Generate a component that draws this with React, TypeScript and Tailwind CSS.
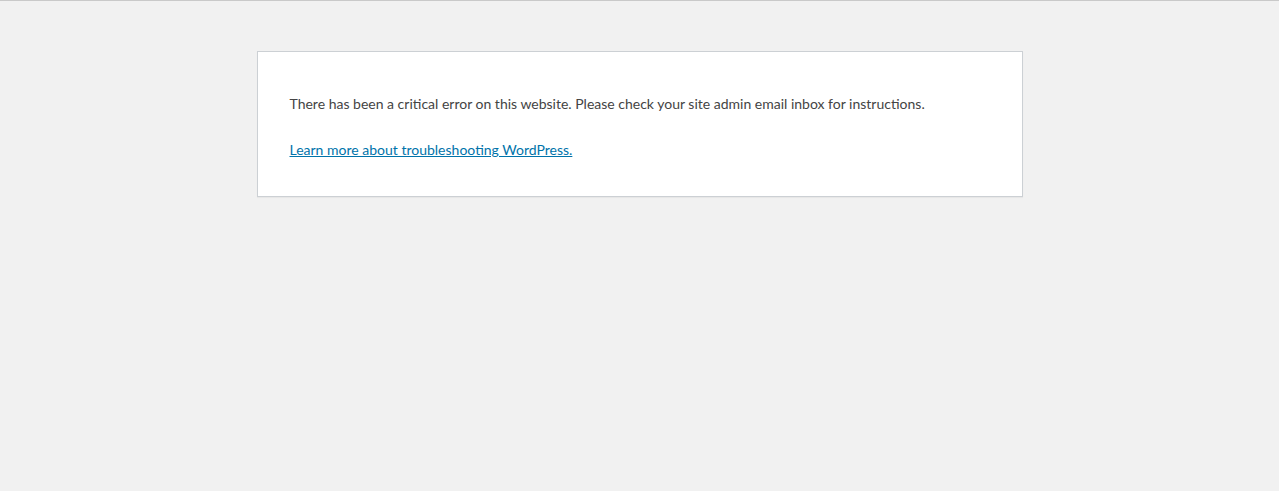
export default function App() {
  return (
    <div className="min-h-[491px] bg-[#f1f1f1] border-t border-[#c9c9c9] pt-[50px]" style={{ fontFamily: 'Lato, "Noto Sans", sans-serif' }}>
      <div className="mx-auto w-[766px] bg-white border border-[#ccd0d4] px-8 py-4 shadow-[0_1px_1px_rgba(0,0,0,0.04)] text-[#444]">
        <p className="text-[14px] leading-[21px] mt-[25px] mb-[25px]">
          There has been a critical error on this website. Please check your site admin email inbox for instructions.
        </p>
        <p className="text-[14px] leading-[21px] mb-[20px]">
          <a href="#" className="text-[#0073aa] underline">Learn more about troubleshooting WordPress.</a>
        </p>
      </div>
    </div>
  );
}
